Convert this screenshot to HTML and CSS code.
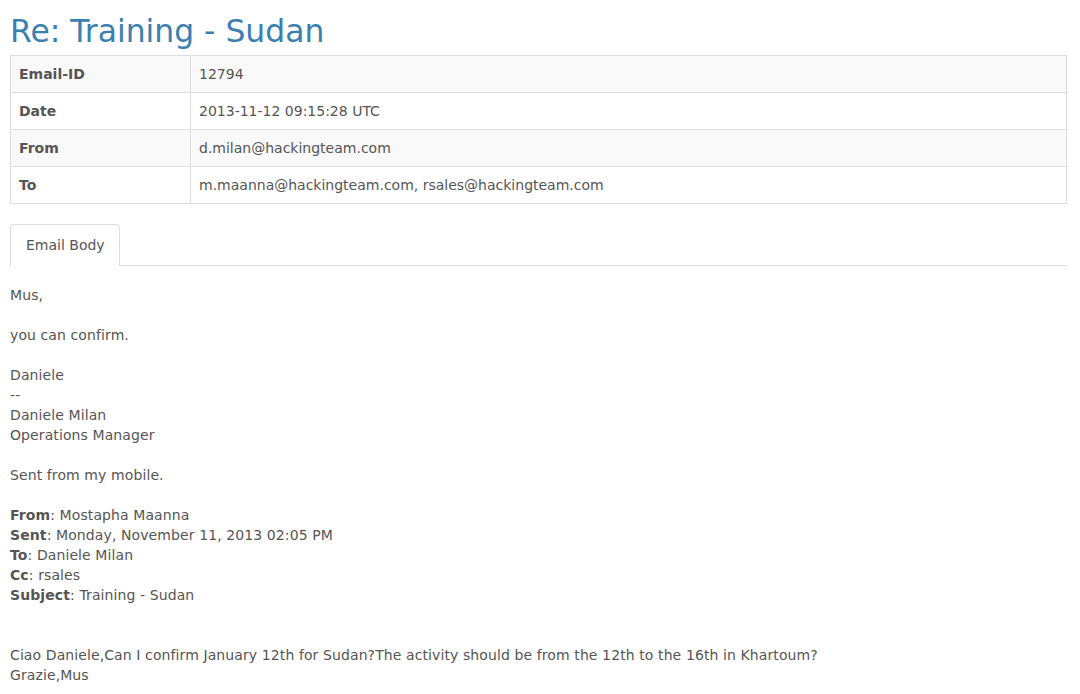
FILE: index.html
```html
<!DOCTYPE html>
<html>
<head>
<meta charset="utf-8">
<link rel="stylesheet" href="styles.css">
</head>
<body>
<div class="page">
  <h1 class="title">Re: Training - Sudan</h1>
  <table class="meta">
    <tr class="odd"><th>Email-ID</th><td>12794</td></tr>
    <tr><th>Date</th><td>2013-11-12 09:15:28 UTC</td></tr>
    <tr class="odd"><th>From</th><td>d.milan@hackingteam.com</td></tr>
    <tr><th>To</th><td>m.maanna@hackingteam.com, rsales@hackingteam.com</td></tr>
  </table>
  <div class="tabs">
    <div class="tab">Email Body</div>
  </div>
  <div class="body">Mus,<br><br>you can confirm.<br><br>Daniele<br>--<br>Daniele Milan<br>Operations Manager<br><br>Sent from my mobile.<br><br><b>From</b>: Mostapha Maanna<br><b>Sent</b>: Monday, November 11, 2013 02:05 PM<br><b>To</b>: Daniele Milan<br><b>Cc</b>: rsales<br><b>Subject</b>: Training - Sudan<br><br><br>Ciao Daniele,Can I confirm January 12th for Sudan?The activity should be from the 12th to the 16th in Khartoum?<br>Grazie,Mus</div>
</div>
</body>
</html>
```
FILE: styles.css
```css
html, body {
  margin: 0;
  padding: 0;
  background: #fff;
}
.page {
  padding: 0 13px 0 10px;
  font-family: "DejaVu Sans", Verdana, sans-serif;
  font-size: 14px;
  line-height: 20px;
  color: #555;
}
.title {
  margin: 0;
  padding-top: 11px;
  height: 55px;
  box-sizing: border-box;
  font-size: 31.4px;
  font-weight: normal;
  line-height: 40px;
  color: #3a7fb0;
}
.meta {
  width: 100%;
  border-collapse: collapse;
  border: 1px solid #ddd;
}
.meta th, .meta td {
  border: 1px solid #ddd;
  padding: 8px;
  height: 20px;
  text-align: left;
  vertical-align: top;
}
.meta th {
  width: 163px;
  font-weight: bold;
}
.meta tr.odd {
  background: #f9f9f9;
}
.tabs {
  margin-top: 20px;
  display: flex;
  border-bottom: 1px solid #ddd;
}
.tab {
  padding: 10px 15px 11px;
  border: 1px solid #ddd;
  border-bottom: none;
  border-radius: 4px 4px 0 0;
  margin-bottom: -1px;
  background: #fff;
  height: 20px;
  width: 78px;
  white-space: nowrap;
}
.body {
  padding-top: 19px;
  letter-spacing: 0.1px;
}
```
